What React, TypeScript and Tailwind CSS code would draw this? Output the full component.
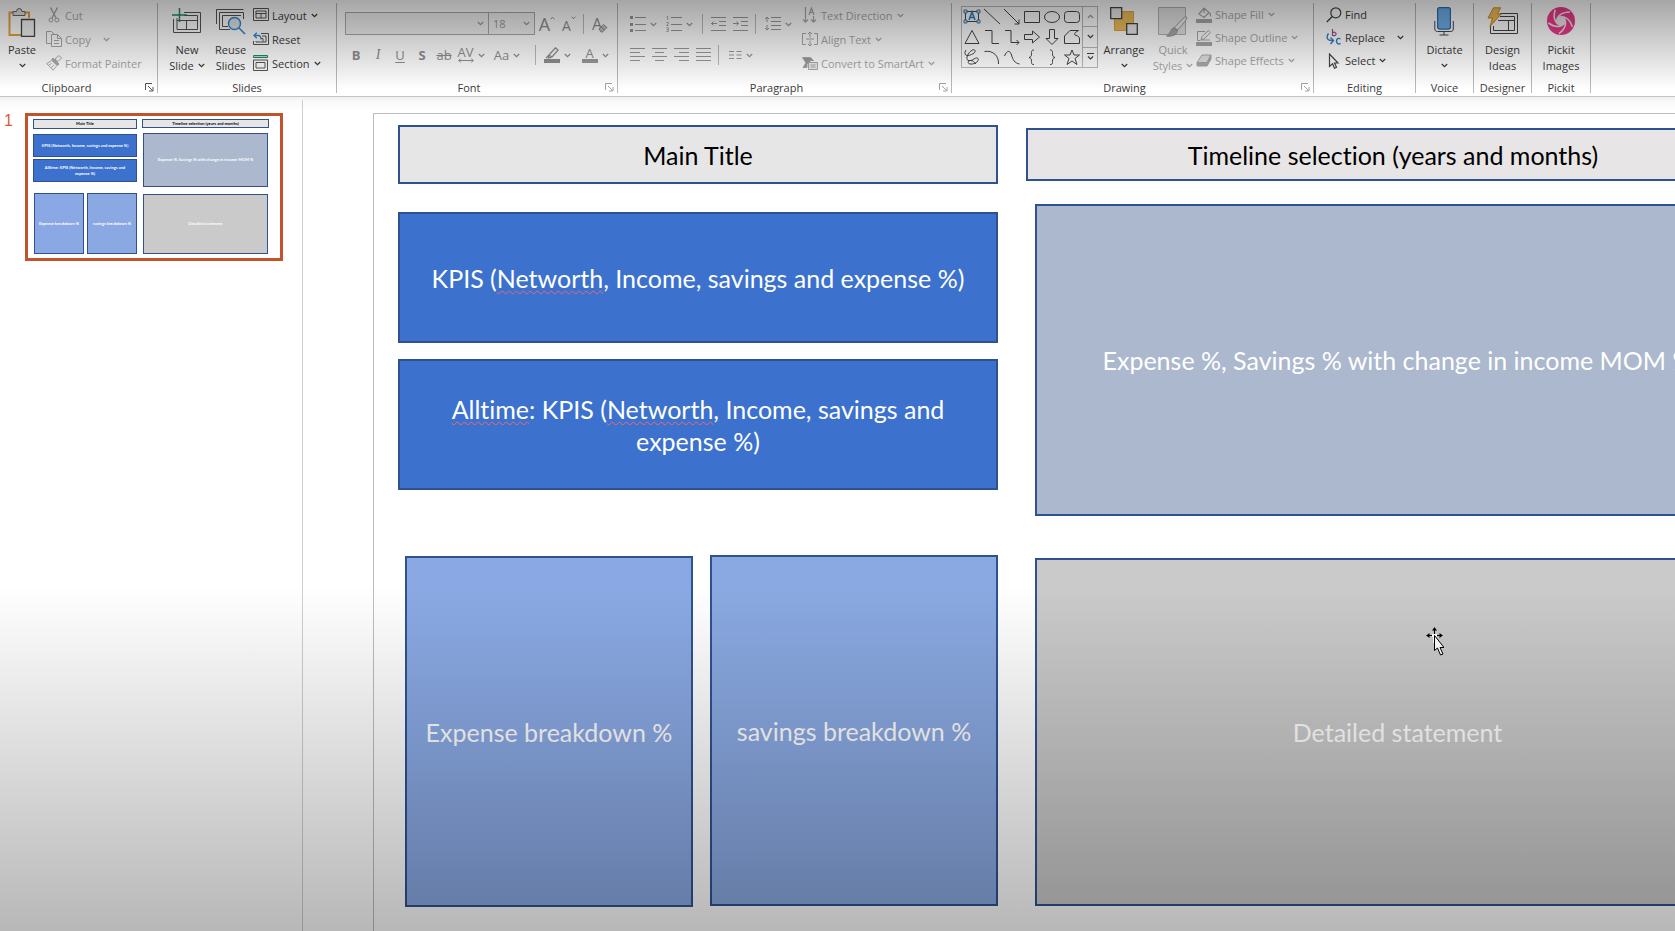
import React from "react";
import clsx from "clsx";

type Children = { children?: React.ReactNode; className?: string };

const Svg = ({ w, h, children, className }: Children & { w: number; h: number }) => (
  <svg
    width={w}
    height={h}
    viewBox={`0 0 ${w} ${h}`}
    fill="none"
    stroke="currentColor"
    aria-hidden="true"
    className={clsx("shrink-0", className)}
  >
    {children}
  </svg>
);

const Chevron = ({ className }: { className?: string }) => (
  <Svg w={7} h={5} className={className}>
    <path d="M.8 1 3.5 3.7 6.2 1" strokeWidth="1.2" />
  </Svg>
);

/* ---------- icons ---------- */

const PasteIcon = () => (
  <Svg w={28} h={30}>
    <path d="M6 5.5H1.5V28H14M17 5.5h4V11" stroke="#e8a33a" strokeWidth="2" />
    <path d="M5 8.500V4.500h3.500a2.700 3 0 0 1 5.400 0H17v4z" fill="#e4e4e4" stroke="#666" />
    <path d="M13.500 12.500h13v17h-13z" fill="#f4f4f4" stroke="#444" strokeWidth="1.300" />
  </Svg>
);
const CutIcon = () => (
  <Svg w={16} h={16}>
    <path d="M4.500.5 10 11M11.500.5 6 11" strokeWidth="1.400" />
    <circle cx="5" cy="13" r="2" />
    <circle cx="11" cy="13" r="2" />
  </Svg>
);
const CopyIcon = () => (
  <Svg w={16} h={16}>
    <path d="M5 12.500H.5V.5h5L8 3M5.500 3.500h6l4 4v8h-10zM11.500 3.500v4h4M8 9.500h5M8 12.500h5" />
  </Svg>
);
const PainterIcon = () => (
  <Svg w={16} h={16}>
    <path d="m9 4 4-3.500L15.500 3 12 6.500z" />
    <path d="m7 3 6 6-2 1.500L5.500 5z" fill="currentColor" />
    <path d="M5 6 .7 8.500 7 15.200 11 10.500M3 10l2.500-1.500M5.200 12.500 8 10" />
  </Svg>
);
const NewSlideIcon = () => (
  <Svg w={30} h={28}>
    <path d="M12 5.500h16.500v20h-27V12M5 11v11.500h20.500V8.500H12M5 13.500h20.500M14.500 13.500v9" stroke="#555" />
    <path d="M7.500 1v14M0 8h15" stroke="#218a6c" strokeWidth="1.500" />
  </Svg>
);
const ReuseIcon = () => (
  <Svg w={31} h={28}>
    <path d="M1.500 17V2.500h27M4.500 20V5.500h24V12M15 22.500H4.500V20M7.500 8.500H26M7.500 8.500v11H13" stroke="#555" />
    <circle cx="19.500" cy="16.500" r="6" fill="#dfe9f2" stroke="#3b86cc" strokeWidth="1.500" />
    <path d="m24 21 6 6" stroke="#3b86cc" strokeWidth="1.600" />
  </Svg>
);
const LayoutIcon = () => (
  <Svg w={16} h={14}>
    <path d="M.5.5h15v12H.5zM3 3h10v7H3zM3 5.500h10M8 5.500V10" stroke="#555" />
  </Svg>
);
const ResetIcon = () => (
  <Svg w={16} h={14}>
    <path d="M8 1.500h7.500v11H.5V9M9 4h4v6H3V9M10 6.500H8M10 6.500v3" stroke="#555" />
    <path d="M1 3.500h4.500c2 0 2.500 1.500 2.500 4M3.800.8 1 3.500l2.800 2.700" stroke="#3b86cc" strokeWidth="1.300" />
  </Svg>
);
const SectionIcon = () => (
  <Svg w={16} h={16}>
    <path d="M.5.5h14v2H.5z" stroke="#218a6c" fill="#bfe0d4" />
    <path d="M.5 5h14v10.500H.5zM3 7.500h9v5.500H3z" stroke="#555" />
  </Svg>
);
const LauncherIcon = () => (
  <Svg w={9} h={9}>
    <path d="M.5 7V.5H7M3 3l4.500 4.500M8 4v4H4" />
  </Svg>
);

const Letter = ({ children, className }: Children) => (
  <span className={clsx("leading-none", className)}>{children}</span>
);

const EraserA = () => (
  <span className="flex items-center">
    <Letter className="text-base">A</Letter>
    <Svg w={10} h={10} className="-ml-1 mt-2">
      <path d="m1 6 4.500-4.500L9 4.500 4.500 9H3z" fill="#c4c4c4" />
      <path d="m3 4 3.500 3" />
    </Svg>
  </span>
);
const GrowA = ({ down = false }: { down?: boolean }) => (
  <span className="flex items-start">
    <Letter className={down ? "pt-1 text-sm" : "text-lg"}>A</Letter>
    <Svg w={5} h={4} className="mt-px">
      <path d={down ? "M.5.7 2.500 2.700 4.500.7" : "M.5 3.300 2.500 1.300 4.500 3.300"} />
    </Svg>
  </span>
);
const HighlightIcon = () => (
  <Svg w={16} h={16}>
    <path d="m5 8 6.500-7.200L14 3 8 10l-3.500 1zM5 8l3 2M2 11l3-3" strokeWidth="1.300" />
    <path d="M0 12h16v4H0z" fill="currentColor" stroke="none" />
  </Svg>
);

const BulletsIcon = () => (
  <Svg w={16} h={16}>
    <path d="M5 1.500h11M5 8.500h11M5 14.500h11" />
    <path d="M0 0h3v3H0zM0 7h3v3H0zM0 13h3v3H0z" fill="currentColor" stroke="none" />
  </Svg>
);
const NumbersIcon = () => (
  <Svg w={16} h={16}>
    <path d="M5 1.500h11M5 8.500h11M5 14.500h11" />
    <path d="M.5 1.200 1.700.5v3.500M.3 6.500h2v1.300L.5 9.500h2M.3 11.800h2v3.700h-2M.8 13.600h1.500" strokeWidth=".8" />
  </Svg>
);
const OutdentIcon = ({ flip = false }: { flip?: boolean }) => (
  <Svg w={15} h={14}>
    <path d="M0 .5h15M8 4.500h7M8 8.500h7M0 13.500h15" />
    <path d={flip ? "M0 6.500h5.500M3.500 4.500l2 2-2 2" : "M6 6.500H.5M2.500 4.500l-2 2 2 2"} />
  </Svg>
);
const SpacingIcon = () => (
  <Svg w={17} h={16}>
    <path d="M7 1.500h10M7 5.500h10M7 9.500h10M7 13.500h10M3 1v5M1 3l2-2 2 2M3 9v5M1 12l2 2 2-2" />
  </Svg>
);
const alignPaths = {
  left: "M0 .5h15M0 4.500h10M0 8.500h15M0 12.500h10",
  center: "M0 .5h15M3 4.500h9M0 8.500h15M3 12.500h9",
  right: "M0 .5h15M5 4.500h10M0 8.500h15M5 12.500h10",
  justify: "M0 .5h15M0 4.500h15M0 8.500h15M0 12.500h15",
};
const AlignIcon = ({ kind }: { kind: keyof typeof alignPaths }) => (
  <Svg w={15} h={14}>
    <path d={alignPaths[kind]} />
  </Svg>
);
const ColumnsIcon = () => (
  <Svg w={13} h={10}>
    <path d="M0 1.500h5M0 5h5M0 8.500h5M7.500 1.500h5M7.500 5h5M7.500 8.500h5" />
  </Svg>
);
const TextDirIcon = () => (
  <Svg w={16} h={17}>
    <path d="M3.500 0v15M1 12.500l2.500 2.700L6 12.500M11.500 9v6M9 12.500l2.500 2.700 2.500-2.700M7 8l2.500-7L12 8M8 5.500h3" strokeWidth="1.200" />
  </Svg>
);
const AlignTextIcon = () => (
  <Svg w={16} h={15}>
    <path d="M4 1.500H.5v11H4M12 1.500h3.500v11H12M4 7h8M8 0v5.500M6 2l2-2 2 2M8 8.500V14M6 12l2 2 2-2" />
  </Svg>
);
const SmartArtIcon = () => (
  <Svg w={16} h={13}>
    <path d="M.5.500h8l3 3H8v3H5v4H1L4 6z" fill="#9a9a9a" />
    <path d="M6.500 5.500h9v7h-9zM8.500 8h5M8.500 10h5" fill="#eee" />
  </Svg>
);

const shapeIcons: React.ReactNode[] = [
  <>
    <path d="M2.500 3.500h13v10h-13z" stroke="#444" />
    <path d="M1 2h3v3H1zM14 2h3v3h-3zM1 12h3v3H1zM14 12h3v3h-3z" fill="#ddd" stroke="#2a7ab5" strokeWidth=".9" />
    <path d="m6 12 3-8 3 8M7 9.500h4" stroke="#2f80c8" strokeWidth="1.600" />
  </>,
  <path d="m1 1 16 15" />,
  <path d="m1 1 15 15M16 11.500V16h-4.500" />,
  <path d="M1.500 3.500h15v11h-15z" />,
  <ellipse cx="9" cy="9" rx="7.500" ry="5.500" />,
  <rect x="1.500" y="3.500" width="15" height="11" rx="3" />,
  <path d="m9 2.500 7 13H2z" />,
  <path d="M2 2.500h7v13h7" />,
  <path d="M2 2.500h6v12h8M13.500 12l2.500 2.500-2.500 2.500" />,
  <path d="M1.500 6.500h8v-3.500l7 6-7 6v-3.500h-8z" />,
  <path d="M6.500 1.500h5v9h3.500l-6 6-6-6h3.500z" />,
  <path d="M7 2.500h8.500c-4 2-5 4-2.500 5 2.500.5 3.500 1.500 3.500 3.500v4.500h-15V8z" />,
  <path d="M3 2c-2 3-1 6 2 5.500S13 5 12 2.500 5 4 4 9s4 4 7 2 5-1 4 1.500-5 4-8 3.500-2-3.500.5-3.500S11 14 13 16" />,
  <path d="M1.500 3.500C10 2 16 8 15.500 16" />,
  <path d="M1.500 8C4 2 7 2 8.500 7s3 8 8 9" />,
  <path d="M11 2C8 2 8.500 4 8.500 6S8 9 6 9.500c2 .5 2.500 1.500 2.500 3.500S8 16.500 11 16.500" />,
  <path d="M7 2c3 0 2.500 2 2.500 4s.5 3 2.500 3.500C10 10 9.500 11 9.500 13s.5 3.500-2.500 3.500" />,
  <path d="m9 2 2 5h5.500l-4.500 3.500 2 6-5-3.500L4 16.500l2-6L1.500 7H7z" />,
];

const ArrangeIcon = () => (
  <Svg w={28} h={28}>
    <path d="M4.500 4.500h19v19h-19z" fill="#efbe5b" stroke="#dda63a" />
    <path d="M.7.7h11v11H.7zM16.700 16.700h10.600v10.600H16.700z" fill="#ececec" stroke="#444" strokeWidth="1.300" />
  </Svg>
);
const QuickStylesIcon = () => (
  <Svg w={30} h={30}>
    <path d="M.5.5h27v27H.5z" fill="#e6e6e6" stroke="#b3b3b3" />
    <path d="M28.500 10c2 1-5 9-9 13l-3-2.500c4-4 10-12 12-10.500z" fill="#eee" stroke="#999" />
    <path d="M16 20.500 19.500 23c0 4-4 7-11 6 4-1.500 3.500-7 7.500-8.500z" fill="#aaa" stroke="#999" />
  </Svg>
);
const FillIcon = () => (
  <Svg w={16} h={16}>
    <path d="m3 7 5-6 5 4.500-5 5zM8 1v5M13 5.500c2 1 1.500 3 1.500 4" strokeWidth="1.200" />
    <path d="M0 12h16v4H0z" fill="currentColor" stroke="none" />
  </Svg>
);
const OutlineIcon = () => (
  <Svg w={16} h={16}>
    <path d="M9 1.500H1.500v9h3M5 9.500 6 6.500l6.500-6 2 2-6.500 6.500zM5 10h9" />
    <path d="M0 12h16v4H0z" fill="currentColor" stroke="none" />
  </Svg>
);
const EffectsIcon = () => (
  <Svg w={16} h={14}>
    <path d="M6 1h9L11 8.500H1z" fill="#e2e2e2" />
    <path d="M1 8.500v3.500h10l4-7V1l-4 7.500zM11 8.500V12" fill="#aaa" />
  </Svg>
);
const FindIcon = () => (
  <Svg w={16} h={16}>
    <circle cx="9.800" cy="5.800" r="5" stroke="#444" strokeWidth="1.200" />
    <path d="M6.200 9.500.8 15" stroke="#444" strokeWidth="1.400" />
  </Svg>
);
const ReplaceIcon = () => (
  <Svg w={16} h={17}>
    <path d="M6.500 0v7M6.500 4c2-2 4 0 3.500 1.500S7.500 7 6.500 6" stroke="#9c4f9c" strokeWidth="1.200" />
    <path d="M14.500 10c-2-1.500-4 0-4 2.200s2 3.600 4 2.200M2.500 4.500C-.5 9 1.500 12 7 11.500M4.500 8.500 7.500 11.500 4.500 15" stroke="#2f80c8" strokeWidth="1.400" />
  </Svg>
);
const SelectIcon = () => (
  <Svg w={16} h={16}>
    <path d="M3.500 1v12.500l3-2.700 2 4.500 2-1-2-4.300H12z" stroke="#444" strokeWidth="1.200" />
  </Svg>
);
const DictateIcon = () => (
  <Svg w={20} h={29}>
    <rect x="3.600" y=".6" width="12.800" height="21.500" rx="2" fill="#6fb0ea" stroke="#2a6cae" strokeWidth="1.200" />
    <path d="M.8 14v8c0 1.500 1 2.500 2.500 2.500h13.500c1.500 0 2.500-1 2.500-2.500v-8M10 24.500V28M5.500 28h9" stroke="#444" />
  </Svg>
);
const DesignIcon = () => (
  <Svg w={31} h={28}>
    <path d="M13 6.500h17.500v20h-27V19M13 9.500h14.500v14h-21V19M11 13.500h16.500M21.500 13.500v10" stroke="#444" />
    <path d="M6.500.8h7.200L10.500 7h3.700L3 19.500 5.500 11H1z" fill="#f3bd55" stroke="#c98a24" />
  </Svg>
);
const PickitIcon = () => (
  <Svg w={28} h={28}>
    <circle cx="14" cy="14" r="14" fill="#ee3a8a" stroke="none" />
    <circle cx="14" cy="14" r="4.500" fill="#f1e6eb" stroke="none" />
    <g stroke="#f1e6eb" strokeWidth="1.600">
      {[0, 72, 144, 216, 288].map((a) => (
        <path key={a} d="M10 16C9 10.500 13.500 5 23 5" transform={`rotate(${a} 14 14)`} />
      ))}
    </g>
  </Svg>
);

/* ---------- ribbon parts ---------- */

const Group = ({
  label,
  launcher,
  launcherOff,
  className,
  bodyClass,
  children,
}: Children & { label: string; launcher?: boolean; launcherOff?: boolean; bodyClass?: string }) => (
  <section aria-label={label} className={clsx("flex shrink-0 flex-col border-r border-[#b9b9b9]", className)}>
    <div className={clsx("flex h-[78px] items-start", bodyClass)}>{children}</div>
    <div className="flex h-3 items-center">
      <span className="flex-1 text-center text-[#3a3a3a]">{label}</span>
      {launcher && (
        <button
          type="button"
          aria-label={`${label} settings`}
          className={clsx("flex w-4 justify-start pl-1", launcherOff ? "text-[#a3a3a3]" : "text-[#555]")}
        >
          <LauncherIcon />
        </button>
      )}
    </div>
  </section>
);

const BigButton = ({
  icon,
  lines,
  chevron,
  off,
  className,
}: {
  icon: React.ReactNode;
  lines: string[];
  chevron?: boolean;
  off?: boolean;
  className?: string;
}) => (
  <button
    type="button"
    className={clsx("flex flex-col items-center pt-1", off ? "text-[#a8a8a8]" : "text-[#3a3a3a]", className)}
  >
    <span className="flex h-[34px] items-start">{icon}</span>
    <span className="flex h-4 items-center">{lines[0]}</span>
    <span className="flex h-4 items-center gap-1">
      {lines[1]}
      {chevron && <Chevron />}
    </span>
  </button>
);

const RowButton = ({
  icon,
  label,
  chevron,
  wide,
  off,
  className,
}: {
  icon: React.ReactNode;
  label: string;
  chevron?: boolean;
  wide?: boolean;
  off?: boolean;
  className?: string;
}) => (
  <button
    type="button"
    className={clsx("flex items-center whitespace-nowrap", off ? "text-[#a8a8a8]" : "text-[#3a3a3a]", className)}
  >
    <span className="flex w-[19px] items-center">{icon}</span>
    {label}
    {chevron && <Chevron className={wide ? "ml-3" : "ml-1"} />}
  </button>
);

const Tool = ({ label, chevron, children, className }: Children & { label: string; chevron?: boolean }) => (
  <button type="button" aria-label={label} className={clsx("flex h-5 items-center justify-center gap-1", className)}>
    {children}
    {chevron && <Chevron className="mt-px" />}
  </button>
);

const Divider = ({ className }: { className?: string }) => (
  <span className={clsx("h-5 w-px shrink-0 bg-[#bdbdbd]", className)} />
);

const FieldSelect = ({ label, value, className }: { label: string; value: string; className?: string }) => (
  <label className={clsx("relative flex h-[23px] border border-[#a9a9a9] bg-black/5", className)}>
    <select
      aria-label={label}
      defaultValue={value}
      className="w-full appearance-none bg-transparent px-1 text-[11px] leading-4 text-[#999] outline-none"
    >
      <option value={value}>{value}</option>
    </select>
    <Chevron className="pointer-events-none absolute right-1 top-2 text-[#999]" />
  </label>
);

const Ribbon = () => (
  <header className="flex h-[97px] shrink-0 overflow-hidden border-b border-[#c4c4c4] bg-white pt-[3px] pb-[3px] font-['Open_Sans',sans-serif] text-[11px] leading-none">
    <Group label="Clipboard" launcher className="-ml-2 w-[166px]" bodyClass="pl-2">
      <BigButton icon={<PasteIcon />} lines={["Paste"]} chevron className="mr-[2px] w-[44px]" />
      <div className="flex flex-col">
        <RowButton off icon={<CutIcon />} label="Cut" className="h-6" />
        <RowButton off icon={<CopyIcon />} label="Copy" chevron wide className="h-6" />
        <RowButton off icon={<PainterIcon />} label="Format Painter" className="h-6" />
      </div>
    </Group>

    <Group label="Slides" className="w-[179px]" bodyClass="pl-2">
      <BigButton icon={<NewSlideIcon />} lines={["New", "Slide"]} chevron className="w-[42px]" />
      <BigButton icon={<ReuseIcon />} lines={["Reuse", "Slides"]} className="w-[45px]" />
      <div className="flex flex-col">
        <RowButton icon={<LayoutIcon />} label="Layout" chevron className="h-6" />
        <RowButton icon={<ResetIcon />} label="Reset" className="h-6" />
        <RowButton icon={<SectionIcon />} label="Section" chevron className="h-6" />
      </div>
    </Group>

    <Group label="Font" launcher launcherOff className="w-[281px]" bodyClass="flex-col pl-2 pt-[9px] text-[#8f8f8f]">
      <div className="flex h-[23px] items-center">
        <FieldSelect label="Font name" value="" className="w-[144px]" />
        <FieldSelect label="Font size" value="18" className="w-[46px] border-l-0" />
        <Tool label="Increase font size" className="w-6"><GrowA /></Tool>
        <Tool label="Decrease font size" className="w-5"><GrowA down /></Tool>
        <Divider className="ml-1" />
        <Tool label="Clear formatting" className="w-8"><EraserA /></Tool>
      </div>
      <div className="mt-2 flex h-6 items-center text-[13px]">
        <Tool label="Bold" className="w-[22px] font-bold">B</Tool>
        <Tool label="Italic" className="w-[22px] font-['Liberation_Serif',serif] text-sm italic">I</Tool>
        <Tool label="Underline" className="w-[22px] underline underline-offset-2">U</Tool>
        <Tool label="Text shadow" className="w-[22px] font-bold">S</Tool>
        <Tool label="Strikethrough" className="w-[22px] line-through">ab</Tool>
        <Tool label="Character spacing" chevron className="w-[32px]">
          <span className="flex flex-col items-center">
            <span className="leading-[11px]">AV</span>
            <Svg w={16} h={5}>
              <path d="M.8 2.500h14.400M2.800.5l-2 2 2 2M13.200.5l2 2-2 2" />
            </Svg>
          </span>
        </Tool>
        <Tool label="Change case" chevron className="w-[40px]">Aa</Tool>
        <Divider className="ml-2" />
        <Tool label="Highlight colour" chevron className="w-[42px]"><HighlightIcon /></Tool>
        <Tool label="Font colour" chevron className="w-[34px]">
          <span className="flex flex-col items-center">
            <span className="leading-[12px]">A</span>
            <span className="h-1 w-4 bg-[#999]" />
          </span>
        </Tool>
      </div>
    </Group>

    <Group label="Paragraph" launcher launcherOff className="w-[334px]" bodyClass="pl-2 text-[#9a9a9a]">
      <div className="flex w-[176px] flex-col pt-[9px]">
        <div className="flex h-[23px] items-center">
          <Tool label="Bullets" chevron className="w-[34px]"><BulletsIcon /></Tool>
          <Tool label="Numbering" chevron className="w-[38px]"><NumbersIcon /></Tool>
          <Divider className="ml-1" />
          <Tool label="Decrease indent" className="ml-1 w-[22px]"><OutdentIcon /></Tool>
          <Tool label="Increase indent" className="w-[22px]"><OutdentIcon flip /></Tool>
          <Divider className="ml-1" />
          <Tool label="Line spacing" chevron className="ml-1 w-[36px]"><SpacingIcon /></Tool>
        </div>
        <div className="mt-2 flex h-6 items-center">
          <Tool label="Align left" className="w-[22px]"><AlignIcon kind="left" /></Tool>
          <Tool label="Align centre" className="w-[22px]"><AlignIcon kind="center" /></Tool>
          <Tool label="Align right" className="w-[22px]"><AlignIcon kind="right" /></Tool>
          <Tool label="Justify" className="w-[22px]"><AlignIcon kind="justify" /></Tool>
          <Divider className="ml-1" />
          <Tool label="Columns" chevron className="ml-2 w-[28px]"><ColumnsIcon /></Tool>
        </div>
      </div>
      <div className="flex flex-col">
        <RowButton off icon={<TextDirIcon />} label="Text Direction" chevron className="h-6" />
        <RowButton off icon={<AlignTextIcon />} label="Align Text" chevron className="h-6" />
        <RowButton off icon={<SmartArtIcon />} label="Convert to SmartArt" chevron className="h-6" />
      </div>
    </Group>

    <Group label="Drawing" launcher launcherOff className="w-[362px]" bodyClass="pl-[9px]">
      <div className="mt-[3px] flex h-[62px] border border-[#b9b9b9]">
        <div className="grid grid-cols-6 text-[#444]">
          {shapeIcons.map((shape, i) => (
            <button key={i} type="button" aria-label={`Shape ${i + 1}`} className="flex h-5 w-5 items-center justify-center">
              <Svg w={18} h={18}>{shape}</Svg>
            </button>
          ))}
        </div>
        <div className="flex w-[15px] flex-col divide-y divide-[#b9b9b9] border-l border-[#b9b9b9] text-[#444]">
          <button type="button" aria-label="Scroll up" className="flex flex-1 items-center justify-center text-[#999]">
            <Chevron className="rotate-180" />
          </button>
          <button type="button" aria-label="Scroll down" className="flex flex-1 items-center justify-center">
            <Chevron />
          </button>
          <button type="button" aria-label="More shapes" className="flex flex-1 items-center justify-center">
            <Svg w={7} h={8}>
              <path d="M0 .5h7M1 3.500 3.500 6 6 3.500" strokeWidth="1.200" />
            </Svg>
          </button>
        </div>
      </div>
      <BigButton icon={<ArrangeIcon />} lines={["Arrange"]} chevron className="w-[52px]" />
      <BigButton off icon={<QuickStylesIcon />} lines={["Quick", "Styles"]} chevron className="w-[46px]" />
      <div className="flex flex-col">
        <RowButton off icon={<FillIcon />} label="Shape Fill" chevron className="h-[23px]" />
        <RowButton off icon={<OutlineIcon />} label="Shape Outline" chevron className="h-[23px]" />
        <RowButton off icon={<EffectsIcon />} label="Shape Effects" chevron className="h-[23px]" />
      </div>
    </Group>

    <Group label="Editing" className="w-[102px]" bodyClass="flex-col pl-3">
      <RowButton icon={<FindIcon />} label="Find" className="h-[23px]" />
      <RowButton icon={<ReplaceIcon />} label="Replace" chevron wide className="h-[23px]" />
      <RowButton icon={<SelectIcon />} label="Select" chevron className="h-[23px]" />
    </Group>
    <Group label="Voice" className="w-[58px]" bodyClass="justify-center">
      <BigButton icon={<DictateIcon />} lines={["Dictate"]} chevron />
    </Group>
    <Group label="Designer" className="w-[58px]" bodyClass="justify-center">
      <BigButton icon={<DesignIcon />} lines={["Design", "Ideas"]} />
    </Group>
    <Group label="Pickit" className="w-[59px]" bodyClass="justify-center">
      <BigButton icon={<PickitIcon />} lines={["Pickit", "Images"]} />
    </Group>
  </header>
);

/* ---------- slide ---------- */

const Misspelt = ({ children }: Children) => (
  <span className="underline decoration-[#ee6a70] decoration-wavy decoration-1 underline-offset-2">{children}</span>
);

type Shape = {
  id: string;
  x: number;
  y: number;
  w: number;
  h: number;
  fill: string;
  text: React.ReactNode;
  plain: string;
};

const shapes: Shape[] = [
  { id: "title", x: 24, y: 11, w: 600, h: 59, fill: "bg-[#e7e6e6] text-black", text: "Main Title", plain: "Main Title" },
  {
    id: "timeline", x: 652, y: 14, w: 734, h: 53, fill: "bg-[#e7e5e5] text-black",
    text: "Timeline selection (years and months)", plain: "Timeline selection (years and months)",
  },
  {
    id: "kpis", x: 24, y: 98, w: 600, h: 131, fill: "bg-[#3c71ce] text-white",
    text: <>KPIS (<Misspelt>Networth</Misspelt>, Income, savings and expense %)</>,
    plain: "KPIS (Networth, Income, savings and expense %)",
  },
  {
    id: "alltime", x: 24, y: 245, w: 600, h: 131, fill: "bg-[#3c71ce] text-white",
    text: <><Misspelt>Alltime</Misspelt>: KPIS (<Misspelt>Networth</Misspelt>, Income, savings and<br />expense %)</>,
    plain: "Alltime: KPIS (Networth, Income, savings and\nexpense %)",
  },
  {
    id: "mom", x: 661, y: 90, w: 725, h: 312, fill: "bg-[#acb8cd] text-white",
    text: "Expense %, Savings % with change in income MOM %",
    plain: "Expense %, Savings % with change in income MOM %",
  },
  { id: "expense", x: 31, y: 442, w: 288, h: 351, fill: "bg-[#8aa9e4] text-white", text: "Expense breakdown %", plain: "Expense breakdown %" },
  { id: "savings", x: 336, y: 441, w: 288, h: 351, fill: "bg-[#8aa9e2] text-white", text: "savings breakdown %", plain: "savings breakdown %" },
  { id: "detail", x: 661, y: 444, w: 725, h: 348, fill: "bg-[#cacaca] text-white", text: "Detailed statement", plain: "Detailed statement" },
];

const Slide = () => (
  <div className="relative h-[820px] w-[1455px] shrink-0 border border-[#bdbdbd] bg-white">
    {shapes.map((s) => (
      <div
        key={s.id}
        className={clsx(
          "absolute flex items-center justify-center border-2 border-[#2f528f] text-center font-['Lato',sans-serif] text-[25px] leading-8 whitespace-nowrap [font-variant-ligatures:none]",
          s.fill,
        )}
        style={{ left: s.x, top: s.y, width: s.w, height: s.h }}
      >
        <p>{s.text}</p>
      </div>
    ))}
    <svg width="18" height="30" viewBox="0 0 18 30" className="absolute left-[1052px] top-[513px]" aria-hidden="true">
      <path d="M8.500 1v15M1 8.500h15" stroke="#fff" strokeWidth="3" />
      <path d="M8.500 2v5M2 8.500h4M11 8.500h4" stroke="#000" strokeWidth="1.500" />
      <path d="M8.500 0 11 3.500H6zM0 8.500 3.500 6v5zM17 8.500 13.500 6v5z" fill="#000" />
      <path d="M8.500 8.500v15l3-2.500 3 7 2.500-1-3-6.500h4z" fill="#fff" stroke="#000" />
    </svg>
  </div>
);

const THUMB = 0.173;
const scaled = (n: number) => Math.round(n * THUMB);

const Thumbnail = () => (
  <button
    type="button"
    aria-label="Slide 1"
    className="relative h-[148px] w-[258px] shrink-0 overflow-hidden border-[3px] border-[#c1542a] bg-white"
  >
    {shapes.map((s) => (
      <span
        key={s.id}
        className={clsx(
          "absolute flex items-center justify-center border border-[#2f528f] text-center font-['Lato',sans-serif] text-[4px] leading-[6px] font-bold whitespace-pre",
          s.fill,
        )}
        style={{ left: scaled(s.x) + 1, top: scaled(s.y) + 1, width: scaled(s.w), height: scaled(s.h) }}
      >
        {s.plain}
      </span>
    ))}
  </button>
);

export default function App() {
  return (
    <div className="relative flex h-screen flex-col overflow-hidden bg-white">
      <Ribbon />
      <div className="h-[3px] shrink-0 bg-[#f3f3f3]" />
      <main className="flex min-h-0 flex-1 bg-linear-to-b from-[#f8f8f8] to-white to-[12px]">
        <nav aria-label="Slides" className="flex w-[303px] shrink-0 items-start border-r border-[#cfcfcf] pt-[13px]">
          <span className="w-[25px] pl-1 font-['Liberation_Sans',sans-serif] text-base leading-4 text-[#cf5f38]">1</span>
          <Thumbnail />
        </nav>
        <div className="min-w-0 flex-1 overflow-hidden pt-[13px] pl-[70px]">
          <Slide />
        </div>
      </main>
      <div className="pointer-events-none absolute inset-x-0 top-0 h-[90px] bg-linear-to-b from-black/35 to-transparent" />
      <div className="pointer-events-none absolute inset-x-0 bottom-0 h-[345px] bg-linear-to-b from-transparent to-black/28" />
    </div>
  );
}
